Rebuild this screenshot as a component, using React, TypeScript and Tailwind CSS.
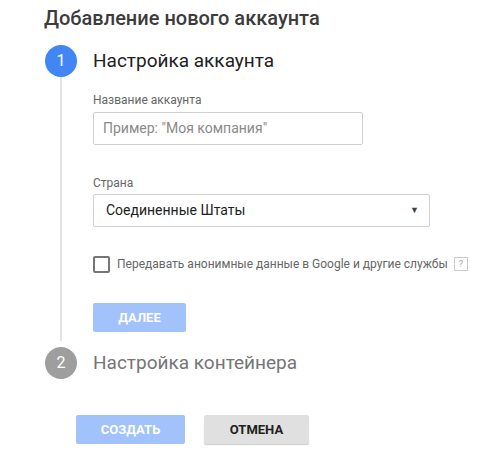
import React from "react";

export default function App() {
  return (
    <div className="w-[487px] h-[456px] bg-white font-['Roboto',sans-serif] overflow-hidden">
      <div className="pl-[44px] pt-[5px] text-[20px] leading-[26px] font-medium text-[#3c3c3c]">
        Добавление нового аккаунта
      </div>
      <div className="ml-[45px] mt-[14px]">
        {/* Step 1 */}
        <div className="flex">
          <div className="w-[32px] flex flex-col items-center">
            <div className="w-[32px] h-[32px] rounded-full bg-[#4285f4] text-white text-[16px] flex items-center justify-center">
              1
            </div>
            <div className="w-px flex-1 bg-[#c8c8c8] mb-[6px] -translate-x-[0.5px]" />
          </div>
          <div className="ml-[16px] flex flex-col items-start pb-[15px]">
            <div className="h-[32px] flex items-center text-[19px] text-[#212121]">
              Настройка аккаунта
            </div>
            <div className="mt-[15px] text-[12px] leading-[16px] text-[#666]">
              Название аккаунта
            </div>
            <div className="mt-[4px] w-[270px] h-[33px] border border-[#d0d0d0] rounded-[2px] flex items-center pl-[9px] text-[14px] text-[#8a8a8a]">
              Пример: "Моя компания"
            </div>
            <div className="mt-[30px] text-[12px] leading-[16px] text-[#666]">
              Страна
            </div>
            <div className="mt-[3px] w-[337px] h-[33px] border border-[#d0d0d0] rounded-[2px] flex items-center justify-between pl-[12px] pr-[10px] text-[14px] text-[#212121]">
              <span>Соединенные Штаты</span>
              <span className="text-[9px] text-[#444]">▼</span>
            </div>
            <div className="mt-[28px] flex items-center">
              <div className="w-[17px] h-[17px] border-2 border-[#757575] rounded-[2px]" />
              <span className="ml-[7px] text-[12px] text-[#666]">
                Передавать анонимные данные в Google и другие службы
              </span>
              <span className="ml-[6px] w-[14px] h-[14px] border border-[#ccc] text-[9px] leading-[12px] text-[#aaa] flex items-center justify-center">
                ?
              </span>
            </div>
            <div className="mt-[30px] w-[93px] h-[29px] rounded-[2px] bg-[#a1c2fa] text-white text-[13px] font-bold flex items-center justify-center">
              ДАЛЕЕ
            </div>
          </div>
        </div>
        {/* Step 2 */}
        <div className="flex items-center">
          <div className="w-[32px] h-[32px] rounded-full bg-[#9e9e9e] text-white text-[16px] flex items-center justify-center">
            2
          </div>
          <div className="ml-[16px] text-[19px] text-[#757575]">Настройка контейнера</div>
        </div>
      </div>
      <div className="ml-[76px] mt-[36px] flex gap-[19px]">
        <div className="w-[109px] h-[29px] rounded-[2px] bg-[#a1c2fa] text-white text-[13px] font-bold flex items-center justify-center">
          СОЗДАТЬ
        </div>
        <div className="w-[105px] h-[29px] rounded-[2px] bg-[#e0e0e0] text-[#212121] text-[13px] font-bold flex items-center justify-center shadow-[0_1px_1px_rgba(0,0,0,0.2)]">
          ОТМЕНА
        </div>
      </div>
    </div>
  );
}
